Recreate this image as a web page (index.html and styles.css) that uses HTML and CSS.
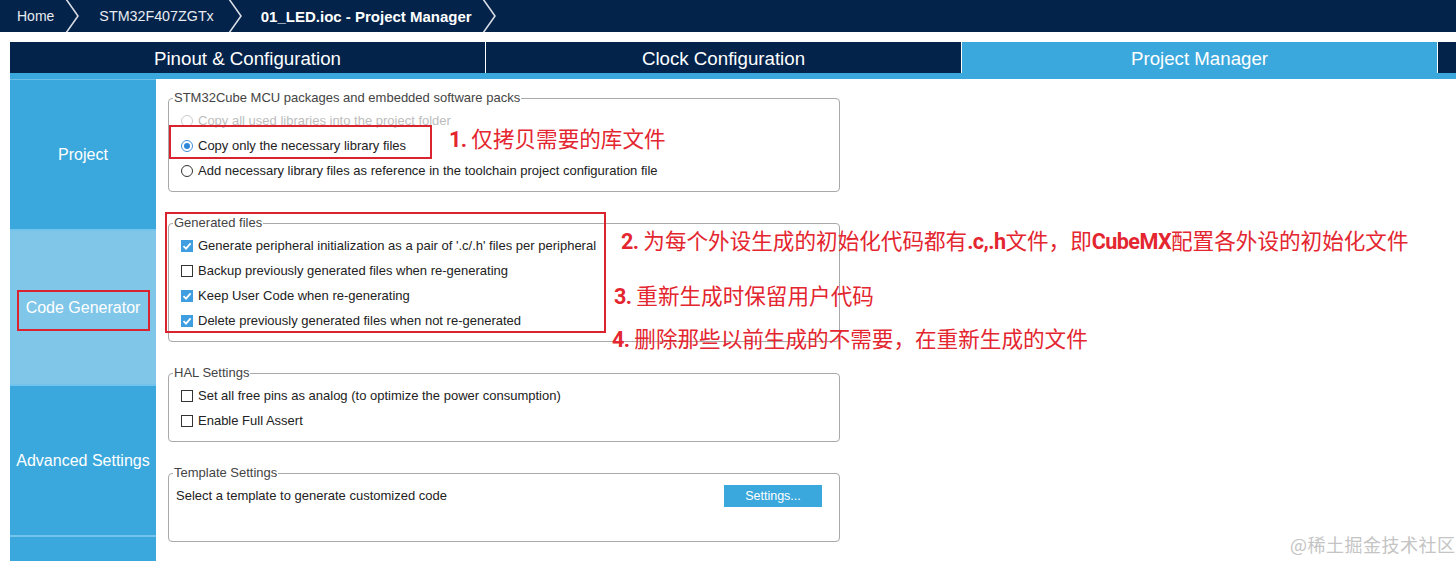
FILE: index.html
```html
<!DOCTYPE html>
<html lang="en">
<head>
<meta charset="utf-8">
<title>01_LED.ioc - Project Manager</title>
<link rel="stylesheet" href="styles.css">
</head>
<body>
<header class="crumbs">
  <span class="crumb c-home">Home</span>
  <svg class="chev" width="14" height="32" viewBox="0 0 14 32"><polyline points="1,-1 13,16 1,33" fill="none" stroke="#d7dce4" stroke-width="1.6"/></svg>
  <span class="crumb c-mcu">STM32F407ZGTx</span>
  <svg class="chev" width="14" height="32" viewBox="0 0 14 32"><polyline points="1,-1 13,16 1,33" fill="none" stroke="#d7dce4" stroke-width="1.6"/></svg>
  <span class="crumb c-title">01_LED.ioc - Project Manager</span>
  <svg class="chev" width="14" height="32" viewBox="0 0 14 32"><polyline points="1,-1 13,16 1,33" fill="none" stroke="#d7dce4" stroke-width="1.6"/></svg>
</header>

<nav class="tabs">
  <div class="tab">Pinout &amp; Configuration</div>
  <div class="tab">Clock Configuration</div>
  <div class="tab active">Project Manager</div>
  <div class="tab rest"></div>
</nav>
<div class="strip"></div>

<main class="main">
  <aside class="side">
    <div class="side-item s-project">Project</div>
    <div class="side-item s-code">Code Generator</div>
    <div class="side-item s-adv">Advanced Settings</div>
    <div class="side-item s-last"></div>
  </aside>

  <section class="content">
    <fieldset class="group">
      <legend>STM32Cube MCU packages and embedded software packs</legend>
      <div class="row disabled"><span class="radio off"></span>Copy all used libraries into the project folder</div>
      <div class="row"><span class="radio on"></span>Copy only the necessary library files</div>
      <div class="row"><span class="radio"></span>Add necessary library files as reference in the toolchain project configuration file</div>
    </fieldset>

    <fieldset class="group">
      <legend>Generated files</legend>
      <div class="row"><span class="check on"><svg width="12" height="12" viewBox="0 0 12 12"><polyline points="2.5,6.2 5,8.6 9.6,3.4" fill="none" stroke="#fff" stroke-width="1.8"/></svg></span>Generate peripheral initialization as a pair of '.c/.h' files per peripheral</div>
      <div class="row"><span class="check"></span>Backup previously generated files when re-generating</div>
      <div class="row"><span class="check on"><svg width="12" height="12" viewBox="0 0 12 12"><polyline points="2.5,6.2 5,8.6 9.6,3.4" fill="none" stroke="#fff" stroke-width="1.8"/></svg></span>Keep User Code when re-generating</div>
      <div class="row"><span class="check on"><svg width="12" height="12" viewBox="0 0 12 12"><polyline points="2.5,6.2 5,8.6 9.6,3.4" fill="none" stroke="#fff" stroke-width="1.8"/></svg></span>Delete previously generated files when not re-generated</div>
    </fieldset>

    <fieldset class="group">
      <legend>HAL Settings</legend>
      <div class="row"><span class="check"></span>Set all free pins as analog (to optimize the power consumption)</div>
      <div class="row"><span class="check"></span>Enable Full Assert</div>
    </fieldset>

    <fieldset class="group template">
      <legend>Template Settings</legend>
      <div class="row trow">Select a template to generate customized code<button class="btn">Settings...</button></div>
    </fieldset>
  </section>
</main>

<div class="mark m-side"></div>
<div class="mark m-copy"></div>
<div class="mark m-gen"></div>

<div class="note n1"><b>1.</b> 仅拷贝需要的库文件</div>
<div class="note n2"><b>2.</b> 为每个外设生成的初始化代码都有<b>.c,.h</b>文件，即<b>CubeMX</b>配置各外设的初始化文件</div>
<div class="note n3"><b>3.</b> 重新生成时保留用户代码</div>
<div class="note n4"><b>4.</b> 删除那些以前生成的不需要，在重新生成的文件</div>

<div class="watermark">@稀土掘金技术社区</div>
</body>
</html>
```

FILE: styles.css
```css
html, body {
  margin: 0;
  padding: 0;
  background: #ffffff;
  width: 1456px;
  height: 561px;
  overflow: hidden;
  font-family: "Liberation Sans", Arial, sans-serif;
}

body { position: relative; }

/* breadcrumb */
.crumbs {
  height: 32px;
  background: #03234b;
  display: flex;
  align-items: center;
  padding-left: 17px;
  color: #e8ebf0;
  font-size: 14px;
}
.chev { display: block; flex: none; }
.c-home { margin-right: 11px; }
.c-mcu { margin-left: 20px; margin-right: 14px; font-size: 14.3px; }
.c-title { margin-left: 19px; margin-right: 10px; font-weight: bold; color: #ffffff; font-size: 15px; }

/* tabs */
.tabs {
  margin-top: 10px;
  margin-left: 10px;
  height: 31px;
  display: flex;
  gap: 1px;
  background: #ffffff;
}
.tab {
  width: 475px;
  flex: none;
  background: #03234b;
  color: #ffffff;
  font-size: 18.7px;
  display: flex;
  align-items: center;
  justify-content: center;
  padding-top: 2px;
  box-sizing: border-box;
}
.tab.active { background: #3aa8dc; }
.tab.rest { flex: 1; width: auto; }
.strip {
  margin-left: 10px;
  height: 6px;
  background: #3aa8dc;
}

/* main area */
.main {
  display: flex;
  height: 482px;
}
.side {
  margin-left: 10px;
  width: 146px;
  flex: none;
  display: flex;
  flex-direction: column;
}
.side-item {
  display: flex;
  align-items: center;
  justify-content: center;
  color: #ffffff;
  font-size: 16px;
  background: #3aa8dc;
  border-bottom: 2px solid #73c3ec;
}
.s-project { border-top: 1px solid #6bbfe9; height: 149px; }
.s-code { height: 153px; background: #80c6e9; }
.s-adv { height: 149px; }
.s-last { flex: 1; border-bottom: none; }

.content {
  padding: 12px 0 0 12px;
}

.group {
  box-sizing: border-box;
  width: 672px;
  min-width: 0;
  margin: 0 0 24px 0;
  padding: 3px 0 8px 0;
  border: 1px solid #a9a9a9;
  border-radius: 4px;
}
.group legend {
  margin-left: 4px;
  padding: 0 1px;
  font-size: 13px;
  line-height: 14px;
  color: #444444;
}
.row {
  height: 25px;
  display: flex;
  align-items: center;
  padding-left: 12px;
  font-size: 13px;
  color: #222222;
}
.row.disabled { color: #bdbdbd; }

.radio {
  box-sizing: border-box;
  width: 12px;
  height: 12px;
  border: 1px solid #333333;
  border-radius: 50%;
  margin-right: 5px;
  flex: none;
  display: flex;
  align-items: center;
  justify-content: center;
}
.radio.off { border-color: #cccccc; }
.radio.on { border-color: #3f8fdc; }
.radio.on::after {
  content: "";
  width: 6px;
  height: 6px;
  border-radius: 50%;
  background: #2d86d8;
}

.check {
  box-sizing: border-box;
  width: 12px;
  height: 12px;
  border: 1px solid #333333;
  margin-right: 5px;
  flex: none;
  display: flex;
}
.check.on {
  border: none;
  background: #3e9ee0;
}
.check svg { display: block; }

.template .trow {
  padding-left: 7px;
  margin-bottom: 25px;
}
.btn {
  margin-left: auto;
  margin-right: 17px;
  width: 98px;
  height: 22px;
  border: none;
  background: #3aa8dc;
  color: #ffffff;
  font-family: "Liberation Sans", Arial, sans-serif;
  font-size: 12.5px;
  padding: 0;
}

/* overlays: annotation marks */
.mark {
  position: absolute;
  box-sizing: border-box;
  border: 2px solid #d9232e;
}
.m-side { left: 17px; top: 290px; width: 133px; height: 41px; }
.m-copy { left: 169px; top: 125px; width: 263px; height: 34px; }
.m-gen { left: 165px; top: 212px; width: 441px; height: 121px; }

.note {
  position: absolute;
  font-family: "Noto Sans CJK SC", "Noto Sans", sans-serif;
  font-size: 21.6px;
  line-height: 30px;
  color: #e3262f;
  white-space: nowrap;
}
.note b {
  font-family: "Liberation Sans Narrow", "Roboto", "Liberation Sans", sans-serif;
  font-weight: bold;
  letter-spacing: -0.6px;
}
.n1 { left: 449px; top: 123px; }
.n2 { left: 621px; top: 225px; }
.n3 { left: 614px; top: 280px; }
.n4 { left: 612px; top: 323px; }

.watermark {
  position: absolute;
  left: 1290px;
  top: 532px;
  font-family: "Noto Sans CJK SC", sans-serif;
  font-size: 18px;
  line-height: 24px;
  letter-spacing: 0.5px;
  color: #c4c4c4;
  white-space: nowrap;
}
```
